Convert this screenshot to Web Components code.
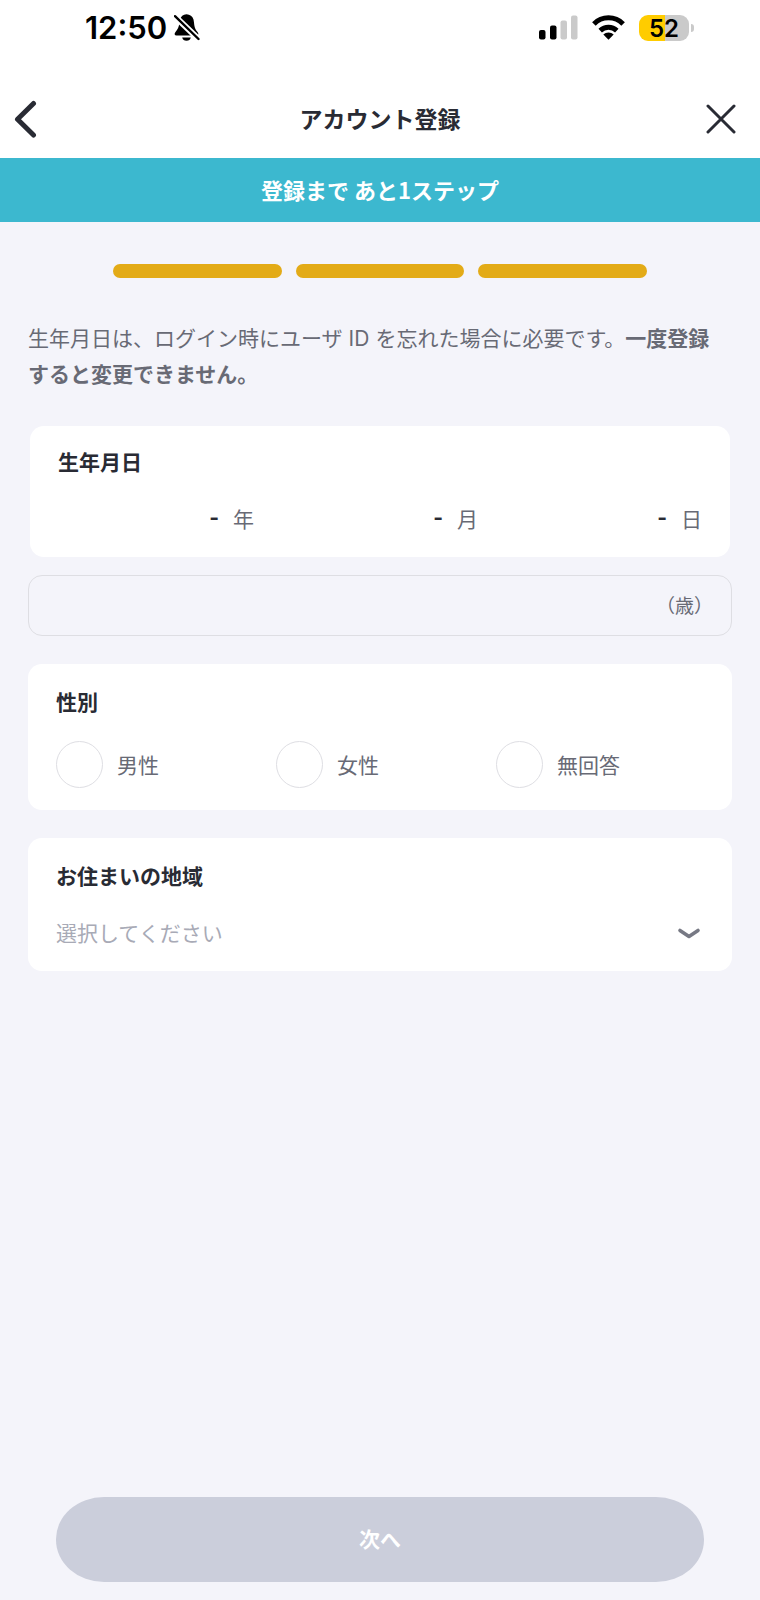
<!DOCTYPE html>
<html lang="ja">
<head>
<meta charset="utf-8">
<meta name="viewport" content="width=device-width, initial-scale=1">
<title>アカウント登録</title>
<style>
    :root {
        --ink: #292b34;
        --sub: #686a75;
        --line: #dedee3;
        --page: #f4f4fa;
        --teal: #3cb8cf;
        --gold: #e3ab17;
    }
    body {
        margin: 0;
        background: var(--page);
        color: var(--ink);
        font-family: "Noto Sans CJK JP", sans-serif;
        font-size: 21px;
        line-height: 30px;
    }
</style>
</head>
<body>
<register-page></register-page>

<script>
class StatusBar extends HTMLElement {
    constructor() {
        super();
        this.attachShadow({ mode: 'open' });
    }

    connectedCallback() {
        this.shadowRoot.innerHTML = `
        <style>
            :host {
                display: flex;
                justify-content: space-between;
                align-items: center;
                height: 55px;
                padding: 0 66px 0 85px;
                background: #fff;
                color: #000;
                font-family: Inter, sans-serif;
                font-weight: 600;
            }
            div { display: flex; align-items: center; }
            svg { display: block; }
            .time { gap: 7px; font-size: 31px; }
            .icons { gap: 14px; }
            .battery { gap: 2px; }
            .level {
                width: 50px;
                height: 26px;
                line-height: 27px;
                border-radius: 9px;
                text-align: center;
                font-size: 24px;
                background: linear-gradient(90deg, #fc0 52%, #cacaca 52%);
            }
            .cap { width: 3px; height: 8px; border-radius: 0 3px 3px 0; background: #cacaca; }
        </style>
        <div class="time">
            <span>12:50</span>
            <svg width="26" height="27" viewBox="0 0 26 27">
                <path d="M12.5.3C9 .3 6.8 2.6 6 5.5 5 10 5.500 13.500 1.500 18 0 19.800.5 21.500 2.500 21.500H22.500C24.500 21.500 25 19.800 23.500 18 19.800 14 20.500 10 19.500 5.500 18.500 2.400 16 .3 12.500.3Z"/>
                <path d="M8.200 23.500H16.800Q16 26.800 12.500 26.800T8.200 23.500Z"/>
                <path d="M-1 .5 25.500 26" stroke="#fff" stroke-width="6"/>
                <path d="M1 2.200 24.500 25" stroke="#000" stroke-width="2.400" stroke-linecap="round"/>
            </svg>
        </div>
        <div class="icons">
            <svg width="39" height="25" viewBox="0 0 39 25">
                <rect y="15" width="6.500" height="9.500" rx="2"/>
                <rect x="11" y="10.500" width="6.500" height="14" rx="2"/>
                <rect x="21.500" y="5.500" width="6.500" height="19" rx="2" fill="#cacaca"/>
                <rect x="32" y=".5" width="6.500" height="24" rx="2" fill="#cacaca"/>
            </svg>
            <svg width="33" height="25" viewBox="0 0 33 25">
                <g fill="none" stroke="#000" stroke-width="5">
                    <path d="M1.900 8.900A20.500 20.500 0 0 1 31.100 8.900"/>
                    <path d="M8.200 15.600A12 12 0 0 1 24.800 15.600"/>
                </g>
                <path d="M16.500 24.800 11.300 19.600A7.200 7.200 0 0 1 21.700 19.600Z"/>
            </svg>
            <div class="battery"><span class="level">52</span><span class="cap"></span></div>
        </div>
        `;
    }
}
customElements.define('status-bar', StatusBar);

class NavHeader extends HTMLElement {
    constructor() {
        super();
        this.attachShadow({ mode: 'open' });
    }

    connectedCallback() {
        this.shadowRoot.innerHTML = `
        <style>
            :host {
                display: flex;
                justify-content: space-between;
                align-items: center;
                padding: 25px 9px 0;
                height: 78px;
                background: #fff;
            }
            h1 { margin: 0; padding-bottom: 3px; font-size: 23px; font-weight: 700; }
            button {
                display: grid;
                place-items: center;
                width: 60px;
                height: 44px;
                padding: 0;
                border: 0;
                background: none;
                color: inherit;
            }
            .back { justify-content: start; padding-left: 5px; }
            svg { fill: none; stroke: currentColor; stroke-linecap: round; stroke-linejoin: round; }
        </style>
        <button class="back" aria-label="戻る">
            <svg width="24" height="38" viewBox="0 0 24 38"><path d="M19.500 3.500 3.500 19.300 19.500 35" stroke-width="5"/></svg>
        </button>
        <h1><slot></slot></h1>
        <button class="close" aria-label="閉じる">
            <svg width="30" height="30" viewBox="0 0 30 30"><path d="M2 2 28 28M28 2 2 28" stroke-width="3"/></svg>
        </button>
        `;
    }
}
customElements.define('nav-header', NavHeader);

class StepBanner extends HTMLElement {
    constructor() {
        super();
        this.attachShadow({ mode: 'open' });
    }

    connectedCallback() {
        this.shadowRoot.innerHTML = `
        <style>
            :host {
                display: block;
                padding: 16px 28px 18px;
                background: var(--teal);
                color: #fff;
                font-size: 22px;
                font-weight: 700;
                text-align: center;
            }
        </style>
        <slot></slot>
        `;
    }
}
customElements.define('step-banner', StepBanner);

class StepProgress extends HTMLElement {
    constructor() {
        super();
        this.attachShadow({ mode: 'open' });
    }

    connectedCallback() {
        const steps = Number(this.getAttribute('steps'));
        this.shadowRoot.innerHTML = `
        <style>
            :host {
                display: flex;
                gap: 14px;
                max-width: 534px;
                width: 100%;
                margin: 0 auto;
            }
            span { flex: 1; height: 14px; border-radius: 7px; background: var(--gold); }
        </style>
        ${'<span></span>'.repeat(steps)}
        `;
    }
}
customElements.define('step-progress', StepProgress);

// White rounded box with a bold title above its field
class FormCard extends HTMLElement {
    constructor() {
        super();
        this.attachShadow({ mode: 'open' });
    }

    connectedCallback() {
        this.shadowRoot.innerHTML = `
        <style>
            :host {
                display: block;
                padding: 22px 28px;
                border-radius: 14px;
                background: #fff;
            }
            h2 { margin: 0; font-size: 21px; font-weight: 700; }
        </style>
        <h2>${this.getAttribute('label')}</h2>
        <slot></slot>
        `;
    }
}
customElements.define('form-card', FormCard);

class BirthField extends HTMLElement {
    constructor() {
        super();
        this.attachShadow({ mode: 'open' });
    }

    connectedCallback() {
        this.shadowRoot.innerHTML = `
        <style>
            :host { display: flex; gap: 28px; margin-top: 27px; color: var(--sub); }
            label { flex: 1; display: flex; align-items: center; gap: 14px; }
            select {
                flex: 1;
                min-width: 0;
                padding: 0;
                border: 0;
                appearance: none;
                background: none;
                color: var(--ink);
                font: inherit;
                font-family: Inter, sans-serif;
                font-weight: 700;
                text-align: right;
                text-align-last: right;
            }
        </style>
        ${['年', '月', '日'].map(unit => `
            <label><select><option>-</option></select><span>${unit}</span></label>
        `).join('')}
        `;
    }
}
customElements.define('birth-field', BirthField);

class AgeField extends HTMLElement {
    constructor() {
        super();
        this.attachShadow({ mode: 'open' });
    }

    connectedCallback() {
        this.shadowRoot.innerHTML = `
        <style>
            :host { display: block; }
            label {
                display: flex;
                padding: 14px 18px 15px 28px;
                border: 1px solid var(--line);
                border-radius: 14px;
                color: var(--sub);
                font-size: 19px;
            }
            input {
                flex: 1;
                min-width: 0;
                padding: 0;
                border: 0;
                background: none;
                font: inherit;
                text-align: right;
            }
        </style>
        <label><input type="text" readonly><span>（歳）</span></label>
        `;
    }
}
customElements.define('age-field', AgeField);

class RadioRow extends HTMLElement {
    constructor() {
        super();
        this.attachShadow({ mode: 'open' });
    }

    connectedCallback() {
        const options = this.getAttribute('options').split(',');
        this.shadowRoot.innerHTML = `
        <style>
            :host {
                display: grid;
                grid-template-columns: repeat(3, 1fr);
                gap: 12px;
                margin-top: 25px;
                color: var(--sub);
            }
            label { display: flex; align-items: center; gap: 14px; }
            span { padding-bottom: 2px; }
            input {
                flex: none;
                box-sizing: border-box;
                width: 47px;
                height: 47px;
                margin: 0;
                border: 1px solid var(--line);
                border-radius: 50%;
                appearance: none;
                background: #fff;
            }
            input:checked { border: 12px solid var(--teal); }
        </style>
        ${options.map(text => `
            <label><input type="radio" name="choice"><span>${text}</span></label>
        `).join('')}
        `;
    }
}
customElements.define('radio-row', RadioRow);

class SelectField extends HTMLElement {
    constructor() {
        super();
        this.attachShadow({ mode: 'open' });
    }

    connectedCallback() {
        this.shadowRoot.innerHTML = `
        <style>
            :host { display: grid; align-items: center; margin-top: 27px; }
            select, svg { grid-area: 1 / 1; }
            select {
                width: 100%;
                padding: 0 0 2px;
                border: 0;
                appearance: none;
                background: none;
                color: #a8aab6;
                font: inherit;
            }
            svg { justify-self: end; margin-right: 3px; pointer-events: none; }
        </style>
        <select aria-label="${this.getAttribute('label')}"><option>${this.getAttribute('placeholder')}</option></select>
        <svg width="24" height="14" viewBox="0 0 24 14" fill="none" stroke="#777984" stroke-width="3.600" stroke-linecap="round" stroke-linejoin="round"><path d="M3 4.500 12 10.500 21 4.500"/></svg>
        `;
    }
}
customElements.define('select-field', SelectField);

class NextButton extends HTMLElement {
    constructor() {
        super();
        this.attachShadow({ mode: 'open' });
    }

    connectedCallback() {
        this.shadowRoot.innerHTML = `
        <style>
            :host { display: block; }
            button {
                width: 100%;
                height: 85px;
                padding: 0 0 3px;
                border: 0;
                border-radius: 48px / 42px;
                background: #cbcedb;
                color: #fff;
                font: inherit;
                font-weight: 700;
            }
        </style>
        <button disabled><slot></slot></button>
        `;
    }
}
customElements.define('next-button', NextButton);

class RegisterPage extends HTMLElement {
    constructor() {
        super();
        this.attachShadow({ mode: 'open' });
    }

    connectedCallback() {
        this.shadowRoot.innerHTML = `
        <style>
            :host { display: flex; flex-direction: column; min-height: 100vh; }
            main {
                flex: 1;
                display: flex;
                flex-direction: column;
                gap: 28px;
                padding: 42px 28px;
            }
            p {
                margin: 14px 0 7px;
                color: var(--sub);
                line-height: 35px;
            }
            .latin { margin: 0 6px; font-family: Inter, sans-serif; }
            .keep { display: inline-block; }
            .birth { display: grid; gap: 18px; }
            .birth form-card { margin: 0 2px; padding: 20px 28px 24px; }
            footer { padding: 0 56px 18px; }
        </style>
        <status-bar></status-bar>
        <nav-header>アカウント登録</nav-header>
        <step-banner>登録まで あと1ステップ</step-banner>
        <main>
            <step-progress steps="3"></step-progress>
            <p>生年月日は、ログイン時にユーザ<span class="latin">ID</span>を忘れた場合に必要です。<b>一度登録</b><b class="keep">すると変更できません。</b></p>
            <div class="birth">
                <form-card label="生年月日"><birth-field></birth-field></form-card>
                <age-field></age-field>
            </div>
            <form-card label="性別"><radio-row options="男性,女性,無回答"></radio-row></form-card>
            <form-card label="お住まいの地域"><select-field label="お住まいの地域" placeholder="選択してください"></select-field></form-card>
        </main>
        <footer><next-button>次へ</next-button></footer>
        `;
    }
}
customElements.define('register-page', RegisterPage);
</script>
</body>
</html>
